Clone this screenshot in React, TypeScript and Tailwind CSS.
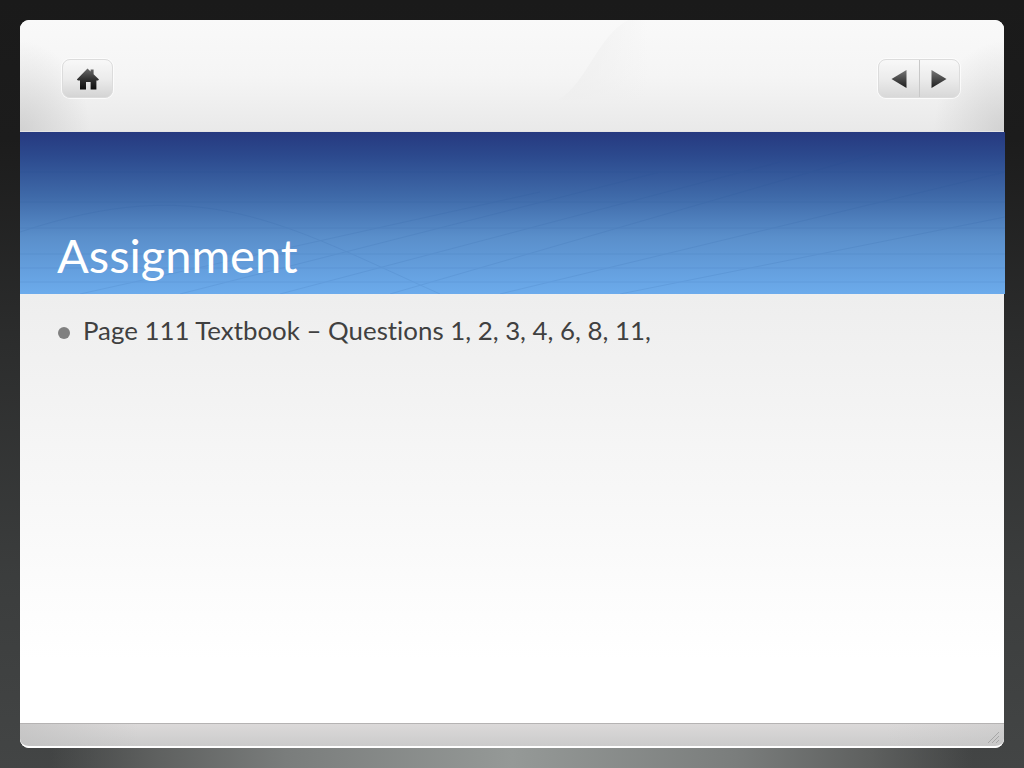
import * as React from "react";

function HomeIcon() {
  return (
    <svg width="24" height="24" viewBox="0 0 24 24">
      <defs>
        <linearGradient id="homeFill" x1="0" y1="0" x2="0" y2="1">
          <stop offset="0" stopColor="#6a6a6a" />
          <stop offset="0.5" stopColor="#333333" />
          <stop offset="1" stopColor="#0c0c0c" />
        </linearGradient>
      </defs>
      <path
        fill="url(#homeFill)"
        d="M11.5 1.5 L14.6 4.4 V2.4 H17.6 V7.2 L23 12.4 L22 13.6 H20.4 V22.5 H14.6 V15 H10 V22.5 H4 V13.6 H2 L0.8 12.4 Z"
      />
    </svg>
  );
}

function Triangle({ dir }: { dir: "left" | "right" }) {
  return (
    <svg width="16" height="18" viewBox="0 0 16 18">
      <defs>
        <linearGradient id={`tri-${dir}`} x1="0" y1="0" x2="0" y2="1">
          <stop offset="0" stopColor="#777777" />
          <stop offset="1" stopColor="#1c1c1c" />
        </linearGradient>
      </defs>
      <path fill={`url(#tri-${dir})`} d={dir === "left" ? "M15.5 0 V18 L0.5 9 Z" : "M0.5 0 V18 L15.5 9 Z"} />
    </svg>
  );
}

export default function App() {
  return (
    <div className="relative h-[768px] w-[1024px] overflow-hidden bg-[linear-gradient(180deg,#1a1a1a_0%,#1c1c1c_18%,#2c2d2d_45%,#3b3d3d_75%,#434545_100%)] p-[20px] font-['Lato','Liberation_Sans',sans-serif] [font-variant-ligatures:none]">
      <div className="absolute bottom-0 left-0 h-[20px] w-[1024px] bg-[linear-gradient(90deg,rgba(70,72,72,0)_5%,#5e605f_15%,#7a7d7c_28%,#959997_50%,#7a7d7c_72%,#5e605f_85%,rgba(70,72,72,0)_95%)]" />

      <div className="relative flex h-[728px] w-[984px] flex-col rounded-[9px] bg-white">
        {/* top strip with buttons */}
        <div className="relative flex h-[112px] items-start justify-between overflow-hidden rounded-t-[9px] border-b border-[#e4e4e4] bg-[linear-gradient(180deg,#f9f9f9_0%,#f5f5f5_50%,#e9e9e9_100%)] pl-[42px] pr-[44px] pt-[39px]">
          <div className="absolute inset-0 bg-[radial-gradient(ellipse_70px_90px_at_0_100%,rgba(190,190,190,0.55),rgba(255,255,255,0)),radial-gradient(ellipse_70px_90px_at_100%_100%,rgba(190,190,190,0.55),rgba(255,255,255,0))]" />
          <svg className="absolute left-[538px] top-0 h-[80px] w-[90px]" viewBox="0 0 90 80">
            <defs>
              <linearGradient id="crease" x1="0" y1="0" x2="1" y2="0">
                <stop offset="0.2" stopColor="#eeeeee" stopOpacity="0.7" />
                <stop offset="1" stopColor="#eeeeee" stopOpacity="0" />
              </linearGradient>
            </defs>
            <path d="M0 80 C30 62 38 18 70 0 H90 V80 Z" fill="url(#crease)" />
          </svg>

          <div className="relative flex h-[39px] w-[51px] items-center justify-center rounded-[8px] border border-[#dcdcdc] bg-[linear-gradient(180deg,#f8f8f8_0%,#ececec_50%,#d4d4d4_100%)] shadow-[0_0_0_1px_rgba(255,255,255,0.7)]">
            <HomeIcon />
          </div>

          <div className="relative flex h-[39px] w-[82px] rounded-[8px] border border-[#dcdcdc] bg-[linear-gradient(180deg,#f8f8f8_0%,#ececec_50%,#d8d8d8_100%)] shadow-[0_0_0_1px_rgba(255,255,255,0.7)]">
            <div className="flex w-[41px] items-center justify-center border-r border-[#c8c8c8]">
              <Triangle dir="left" />
            </div>
            <div className="flex flex-1 items-center justify-center pr-[2px]">
              <Triangle dir="right" />
            </div>
          </div>
        </div>

        {/* title band */}
        <div className="relative mr-[-1px] flex h-[162px] items-end overflow-hidden bg-[linear-gradient(180deg,#26397f_0%,#2c4a8e_15%,#3f6aa9_40%,#5a8fcb_65%,#6cabec_100%)] pb-[11px] pl-[37px]">
          <svg className="absolute inset-0 h-full w-full opacity-[0.1]" viewBox="0 0 985 162" fill="none" stroke="#1f4f93" strokeWidth="1">
            <path d="M0 100 C180 40 260 90 420 162" />
            <path d="M60 162 L520 60" />
            <path d="M160 162 L640 40" />
            <path d="M260 162 L760 30" />
            <path d="M370 162 L860 20" />
            <path d="M480 162 L985 40" />
            <path d="M600 162 L985 85" />
            <path d="M0 40 H985" />
            <path d="M0 70 H985" />
            <path d="M0 96 H985" />
            <path d="M0 122 H985" />
            <path d="M0 136 H985" />
            <path d="M0 150 H985" />
          </svg>
          <h1 className="relative text-[47px] leading-[56px] text-white">Assignment</h1>
        </div>

        {/* body */}
        <div className="flex-1 bg-[linear-gradient(180deg,#eeeeee_0%,#f4f4f4_30%,#fbfbfb_65%,#ffffff_85%)] pl-[38px] pt-[19px]">
          <div className="flex items-center gap-[13px] text-[25.85px] leading-[34px] text-[#404040]">
            <span className="mt-[6px] h-[12px] w-[12px] rounded-full bg-[#808080]" />
            <span>Page 111 Textbook – Questions 1, 2, 3, 4, 6, 8, 11,</span>
          </div>
        </div>

        {/* footer */}
        <div className="relative h-[25px] rounded-b-[9px] border-t border-[#b5b3b3] border-b-2 border-b-white bg-[linear-gradient(90deg,rgba(190,190,190,0.6)_0%,rgba(190,190,190,0)_12%,rgba(190,190,190,0)_88%,rgba(190,190,190,0.3)_100%),linear-gradient(180deg,#dbd9d9_0%,#cbcbcb_100%)]">
          <svg className="absolute bottom-[2px] right-[4px]" width="14" height="14" viewBox="0 0 14 14" stroke="#a6a6a6" strokeWidth="1">
            <path d="M2 13 L13 2" />
            <path d="M6 13 L13 6" />
            <path d="M10 13 L13 10" />
          </svg>
        </div>
      </div>
    </div>
  );
}
